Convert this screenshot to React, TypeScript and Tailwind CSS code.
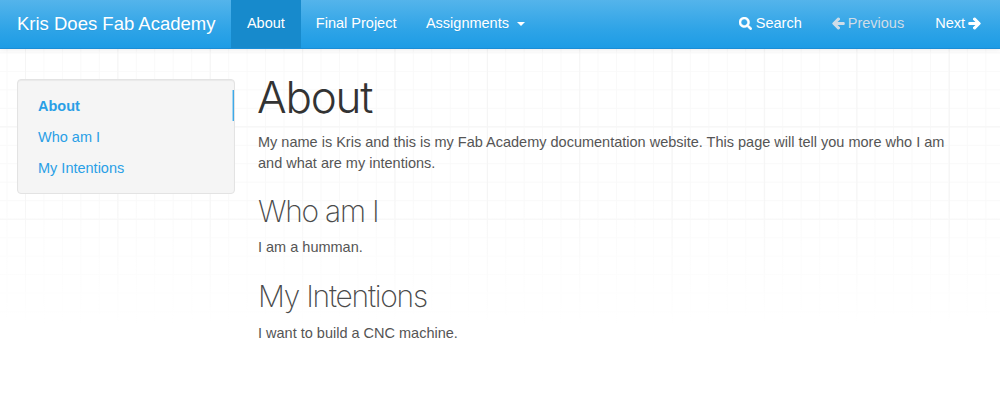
import { FaSearch, FaArrowLeft, FaArrowRight } from "react-icons/fa";

const sans = "font-['Liberation_Sans',Arial,sans-serif]";

function NavLink({ children, active, muted, pad = "px-[15.5px]" }: { children: React.ReactNode; active?: boolean; muted?: boolean; pad?: string }) {
  return (
    <a
      className={`flex h-full items-center pb-[2px] text-[14.5px] [text-shadow:0_1px_0_rgba(0,0,0,0.05)] ${pad} ${
        active ? "bg-[#178acc] text-white" : muted ? "text-[#cfdde8]" : "text-white"
      }`}
    >
      {children}
    </a>
  );
}

export default function App() {
  return (
    <div
      className={`${sans} flex h-[401px] flex-col overflow-hidden bg-white text-[14.5px] leading-[21px] text-[#555555] bg-[linear-gradient(to_bottom,rgba(255,255,255,0)_0px,rgba(255,255,255,0)_190px,rgba(255,255,255,1)_325px,rgba(255,255,255,1)_401px),linear-gradient(to_right,#f5f5f5_1px,transparent_1px),linear-gradient(to_bottom,#f5f5f5_1px,transparent_1px),linear-gradient(to_right,#f9f9f9_1px,transparent_1px),linear-gradient(to_bottom,#f9f9f9_1px,transparent_1px)] bg-[size:100%_100%,92.4px_92.4px,92.4px_92.4px,18.48px_18.48px,18.48px_18.48px] bg-[position:0_0,25px_34px,25px_34px,6.5px_15.5px,6.5px_15.5px]`}
    >
      <nav className="flex h-[49px] shrink-0 items-stretch justify-between border-b border-b-[#1b8dd6] bg-[linear-gradient(to_bottom,#54b4eb,#2fa4e7_60%,#1d9ce5)] shadow-[0_1px_5px_rgba(0,0,0,0.08)]">
        <div className="flex items-stretch">
          <a className="flex items-center pb-[2px] pl-[17px] pr-[15px] text-[18.5px] text-white [text-shadow:0_1px_0_rgba(0,0,0,0.05)]">
            Kris Does Fab Academy
          </a>
          <NavLink active pad="ml-[1px] pl-[15.5px] pr-[16.5px]">About</NavLink>
          <NavLink pad="pl-[14.5px] pr-[14.5px]">Final Project</NavLink>
          <NavLink pad="px-[15px]">
            Assignments
            <span className="ml-[8px] mt-[1px] h-0 w-0 border-x-[4px] border-t-[4px] border-x-transparent border-t-white" />
          </NavLink>
        </div>
        <div className="flex items-stretch pr-[3.5px]">
          <NavLink>
            <FaSearch className="mr-[4px] size-[13px] stroke-[20]" />
            Search
          </NavLink>
          <NavLink muted pad="pl-[14.5px] pr-[15.5px]">
            <FaArrowLeft className="mr-[3px] size-[13px] stroke-[40]" />
            Previous
          </NavLink>
          <NavLink>
            Next
            <FaArrowRight className="ml-[3px] size-[13px] stroke-[40]" />
          </NavLink>
        </div>
      </nav>
      <div className="flex items-start pl-[17px]">
        <aside className="mt-[30px] w-[218px] shrink-0 rounded border border-[#e3e3e3] bg-[#f5f5f5] py-[10px] shadow-[inset_0_1px_1px_rgba(0,0,0,0.05)]">
          <a className="block pl-[20px] pt-[1px] leading-[30px] font-bold text-[#2a9fe6] shadow-[inset_-1px_0_0_#3ea9e8,inset_-2px_0_0_#a5d5f0]">About</a>
          <a className="block pl-[20px] pt-[1px] leading-[30px] text-[#2a9fe6]">Who am I</a>
          <a className="block pl-[20px] pt-[1px] leading-[30px] text-[#2a9fe6]">My Intentions</a>
        </aside>
        <main className="ml-[23px] w-[700px]">
          <h1 className="ml-[-1px] mt-[23px] font-['Inter',sans-serif] text-[44px] leading-[50px] font-light tracking-[-1.2px] text-[#333333]">About</h1>
          <p className="mt-[10px]">
            My name is Kris and this is my Fab Academy documentation website. This page will tell you more who I am and what are my intentions.
          </p>
          <h2 className="mt-[19px] font-['Inter',sans-serif] text-[30px] leading-[36px] font-extralight tracking-[-1.25px] text-[#4a4a4a]">Who am I</h2>
          <p className="mt-[8px]">I am a humman.</p>
          <h2 className="mt-[20px] font-['Inter',sans-serif] text-[30px] leading-[36px] font-extralight tracking-[-1.25px] text-[#4a4a4a]">My Intentions</h2>
          <p className="mt-[9px]">I want to build a CNC machine.</p>
        </main>
      </div>
    </div>
  );
}
